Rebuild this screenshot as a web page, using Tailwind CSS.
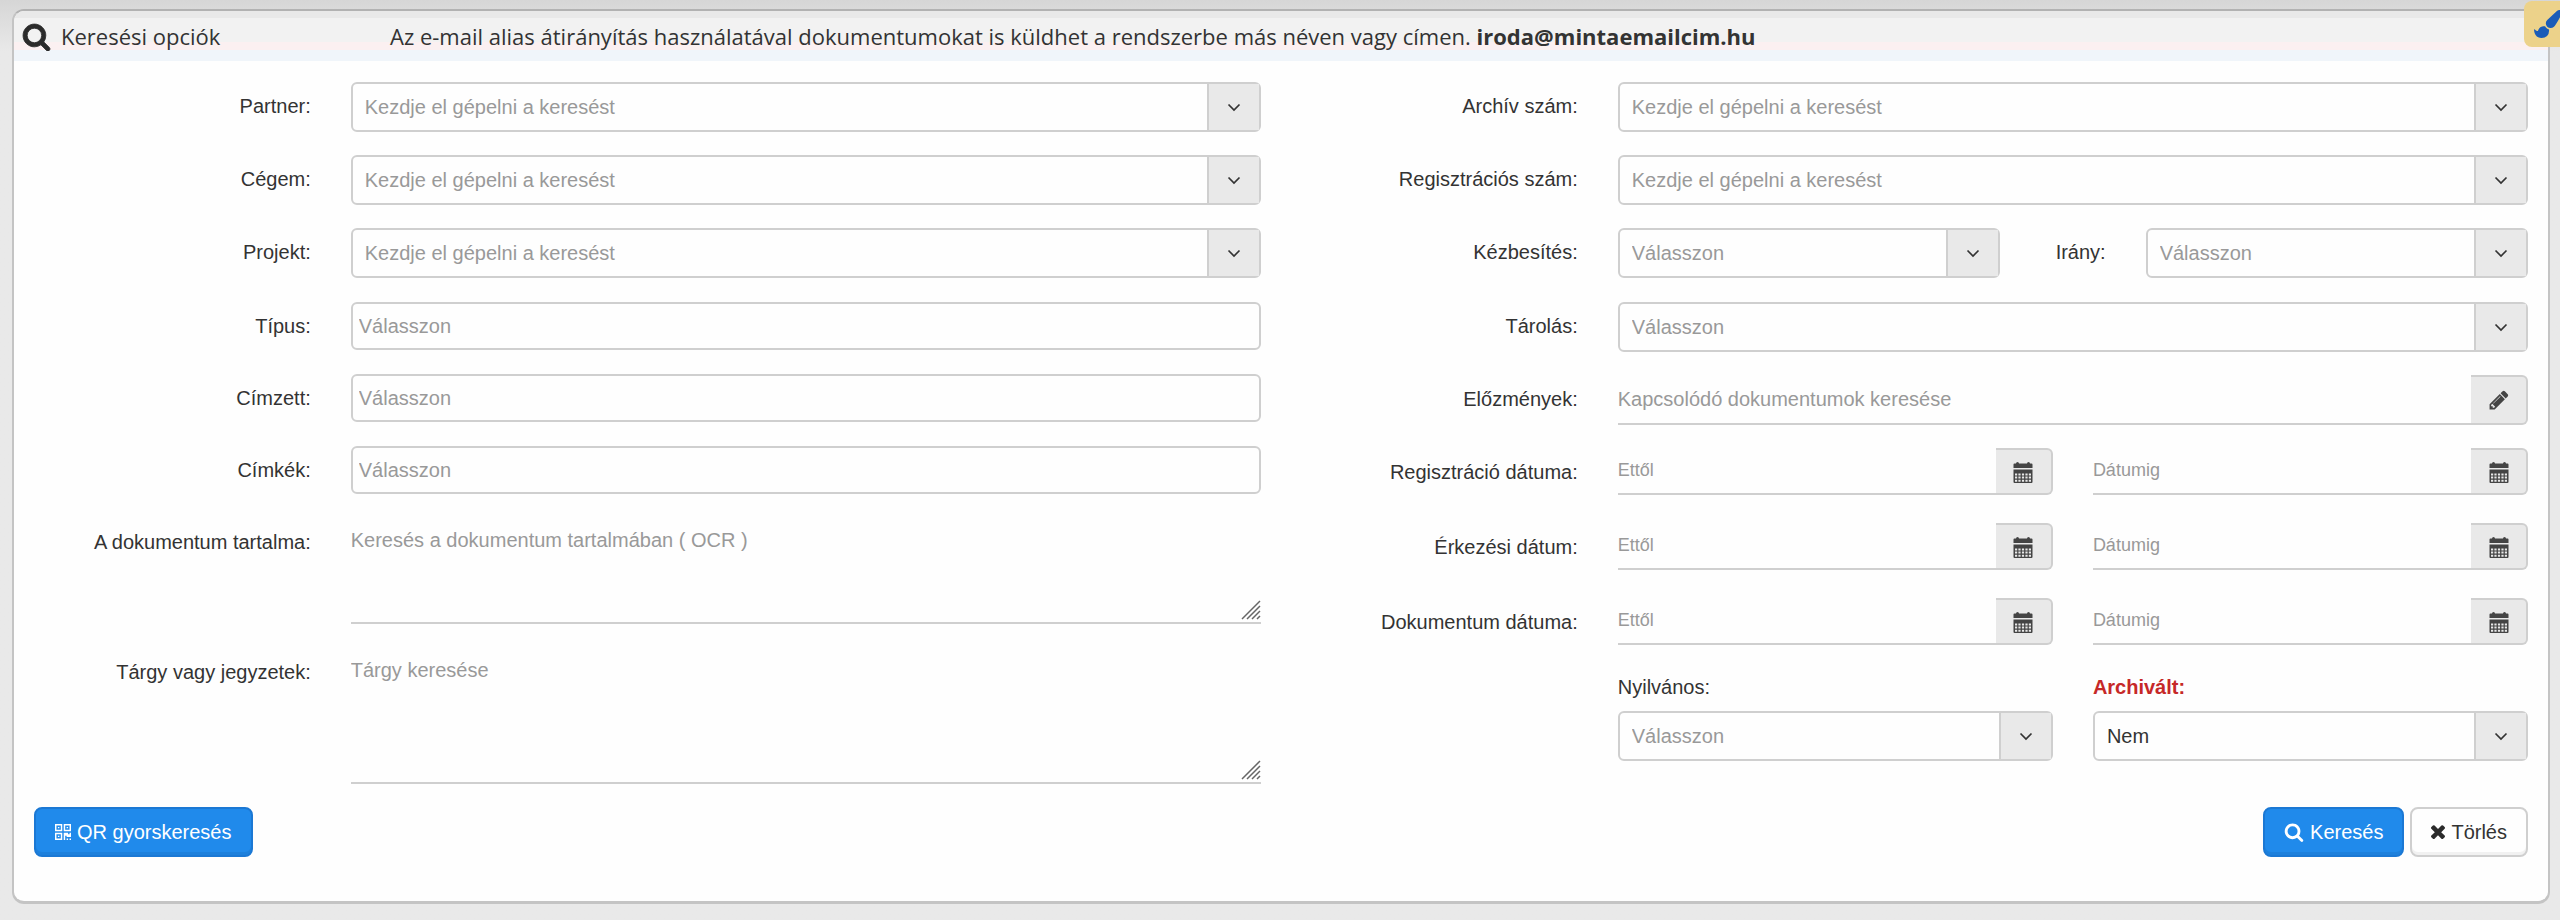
<!DOCTYPE html>
<html lang="hu">
<head>
  <meta charset="UTF-8" />
  <meta name="viewport" content="width=device-width, initial-scale=1" />
  <title>Keresési opciók</title>
  <script src="https://cdn.jsdelivr.net/npm/@tailwindcss/browser@4"></script>
</head>
<body class="relative min-h-screen overflow-x-hidden bg-[#e9e9e9] bg-linear-to-b from-[#d6d6d6] from-0% to-[#e9e9e9] to-[52px] pt-[9px] pr-2.5 pb-4 pl-3 font-['Liberation_Sans',Arial,sans-serif] text-xl/6 text-[#333]">
  <!-- Icons -->
  <svg class="hidden">
    <symbol id="i-search" viewBox="0 0 1792 1792"><path d="M1216 832q0-185-131.500-316.500t-316.500-131.500-316.500 131.500-131.500 316.500 131.500 316.500 316.500 131.500 316.500-131.500 131.500-316.500zm512 832q0 52-38 90t-90 38q-54 0-90-38l-343-342q-179 124-399 124-143 0-273.500-55.500t-225-150-150-225-55.500-273.500 55.500-273.500 150-225 225-150 273.500-55.500 273.500 55.500 225 150 150 225 55.500 273.500q0 220-124 399l343 343q37 37 37 90z" /></symbol>
    <symbol id="i-brush" viewBox="0 0 1792 1792"><path d="M1615 0q70 0 122.500 46.500t52.500 116.500q0 63-45 151-332 629-465 752-97 91-218 91-126 0-216.500-92.500t-90.500-219.500q0-128 92-212l638-579q59-54 130-54zm-909 1034q39 76 106.500 130t150.500 76l1 71q4 213-129.500 347t-348.500 134q-123 0-218-46.500t-152.500-127.500-86.500-183-29-220q7 5 41 30t62 44.500 59 36.500 46 17q41 0 55-37 25-66 57.500-112.500t69.500-76 88-47.500 103-25.500 125-10.500z" /></symbol>
    <symbol id="i-pencil" viewBox="0 0 1792 1792"><path d="M491 1536l91-91-235-235-91 91v107h128v128h107zm523-928q0-22-22-22-10 0-17 7l-542 542q-7 7-7 17 0 22 22 22 10 0 17-7l542-542q7-7 7-17zm-54-192l416 416-832 832h-416v-416zm683 96q0 53-37 90l-166 166-416-416 166-165q36-38 90-38 53 0 91 38l235 234q37 39 37 91z" /></symbol>
    <symbol id="i-times" viewBox="300 350 1192 1192"><path d="M1490 1322q0 40-28 68l-136 136q-28 28-68 28t-68-28l-294-294-294 294q-28 28-68 28t-68-28l-136-136q-28-28-28-68t28-68l294-294-294-294q-28-28-28-68t28-68l136-136q28-28 68-28t68 28l294 294 294-294q28-28 68-28t68 28l136 136q28 28 28 68t-28 68l-294 294 294 294q28 28 28 68z" /></symbol>
    <symbol id="i-chevron" viewBox="0 0 14 14"><path d="M1.500 4.500L7 10L12.500 4.500" fill="none" stroke="currentColor" stroke-width="1.700" /></symbol>
    <symbol id="i-calendar" viewBox="0 0 20 22">
      <path fill-rule="evenodd" d="M3 1.500a1.500 1.500 0 0 1 3 0h8a1.500 1.500 0 0 1 3 0h1.500q1 0 1 1V6H.5V2.500q0-1 1-1zM.5 7.500h19V20q0 1-1 1h-17q-1 0-1-1zM2 11.500v2h2.200v-2zm3.400 0v2h2.200v-2zm3.500 0v2h2.200v-2zm3.500 0v2h2.200v-2zm3.400 0v2h2.200v-2zM2 14.600v2h2.200v-2zm3.400 0v2h2.200v-2zm3.500 0v2h2.200v-2zm3.500 0v2h2.200v-2zm3.400 0v2h2.200v-2zM2 17.700v2h2.200v-2zm3.400 0v2h2.200v-2zm3.500 0v2h2.200v-2zm3.500 0v2h2.200v-2zm3.400 0v2h2.200v-2z" />
    </symbol>
    <symbol id="i-qrcode" viewBox="0 0 11 11">
      <path fill-rule="evenodd" d="M0 0h5v5H0zM1 1v3h3V1zM2 2h1v1H2zM6 0h5v5H6zM7 1v3h3V1zM8 2h1v1H8zM0 6h5v5H0zM1 7v3h3V7zM2 8h1v1H2zM6 6h3v1h1V6h1v3H8V8H7v3H6zM8 10h1v1H8zM10 10h1v1h-1z" />
    </symbol>
    <symbol id="i-grip" viewBox="0 0 20 20"><path d="M1 19L19 1M6 19L19 6M11 19L19 11M16 19L19 16" fill="none" stroke="currentColor" stroke-width="1.500" /></symbol>
  </svg>

  <form class="rounded-xl border-2 border-b-3 border-[#c4c4c4] border-t-[#b2b2b2] bg-[#fefefe]" onsubmit="return false">
    <!-- Header -->
    <header class="flex h-[50px] items-center rounded-t-[10px] bg-[linear-gradient(#e9e9e9_7px,#f2f2f2_7px,#f2f2f2_31px,#fbf0f1_31px,#fbf0f1_39px,#f0f5fa_39px)] px-2 font-['Open_Sans',sans-serif] text-[22px]/8">
      <h1 class="flex w-92 shrink-0 items-center gap-2.5">
        <svg class="size-[29px] fill-[#2b2b2b] stroke-[#2b2b2b] stroke-[50]"><use href="#i-search" /></svg>
        Keresési opciók
      </h1>
      <p>Az e-mail alias átirányítás használatával dokumentumokat is küldhet a rendszerbe más néven vagy címen. <b>iroda@mintaemailcim.hu</b></p>
    </header>

    <div class="px-5 pt-[21px] pb-11">
      <div class="grid grid-cols-2 gap-x-10">
        <!-- Left column -->
        <div class="flex flex-col gap-6">
          <div class="grid grid-cols-12 gap-x-10 gap-y-[23px]">
            <label for="partner" class="col-span-3 pt-3 text-right">Partner:</label>
            <div class="col-span-9 flex h-[50px] rounded-md border-2 border-[#cfcfcf]">
              <input id="partner" type="text" placeholder="Kezdje el gépelni a keresést" class="min-w-0 flex-1 px-3 placeholder:text-[#999]" />
              <button type="button" aria-label="Partner lista" class="flex w-[52px] items-center justify-center border-l-2 border-[#cfcfcf] bg-[#e9e9e9]"><svg class="size-3.5"><use href="#i-chevron" /></svg></button>
            </div>

            <label for="cegem" class="col-span-3 pt-3 text-right">Cégem:</label>
            <div class="col-span-9 flex h-[50px] rounded-md border-2 border-[#cfcfcf]">
              <input id="cegem" type="text" placeholder="Kezdje el gépelni a keresést" class="min-w-0 flex-1 px-3 placeholder:text-[#999]" />
              <button type="button" aria-label="Cég lista" class="flex w-[52px] items-center justify-center border-l-2 border-[#cfcfcf] bg-[#e9e9e9]"><svg class="size-3.5"><use href="#i-chevron" /></svg></button>
            </div>

            <label for="projekt" class="col-span-3 pt-3 text-right">Projekt:</label>
            <div class="col-span-9 flex h-[50px] rounded-md border-2 border-[#cfcfcf]">
              <input id="projekt" type="text" placeholder="Kezdje el gépelni a keresést" class="min-w-0 flex-1 px-3 placeholder:text-[#999]" />
              <button type="button" aria-label="Projekt lista" class="flex w-[52px] items-center justify-center border-l-2 border-[#cfcfcf] bg-[#e9e9e9]"><svg class="size-3.5"><use href="#i-chevron" /></svg></button>
            </div>
          </div>

          <div class="grid grid-cols-12 gap-x-10 gap-y-6">
            <label for="tipus" class="col-span-3 pt-3 text-right">Típus:</label>
            <input id="tipus" type="text" placeholder="Válasszon" class="col-span-9 h-12 rounded-md border-2 border-[#cfcfcf] px-1.5 placeholder:text-[#999]" />

            <label for="cimzett" class="col-span-3 pt-3 text-right">Címzett:</label>
            <input id="cimzett" type="text" placeholder="Válasszon" class="col-span-9 h-12 rounded-md border-2 border-[#cfcfcf] px-1.5 placeholder:text-[#999]" />

            <label for="cimkek" class="col-span-3 pt-3 text-right">Címkék:</label>
            <input id="cimkek" type="text" placeholder="Válasszon" class="col-span-9 h-12 rounded-md border-2 border-[#cfcfcf] px-1.5 placeholder:text-[#999]" />

            <label for="tartalom" class="col-span-3 pt-3 text-right">A dokumentum tartalma:</label>
            <div class="relative col-span-9">
              <textarea id="tartalom" placeholder="Keresés a dokumentum tartalmában ( OCR )" class="block h-[106px] w-full resize-none border-b-2 border-[#cfcfcf] pt-2.5 placeholder:text-[#999]"></textarea>
              <svg class="pointer-events-none absolute right-0 bottom-1 size-5 text-[#666]"><use href="#i-grip" /></svg>
            </div>

            <label for="targy" class="col-span-3 pt-3 text-right">Tárgy vagy jegyzetek:</label>
            <div class="relative col-span-9">
              <textarea id="targy" placeholder="Tárgy keresése" class="block h-[136px] w-full resize-none border-b-2 border-[#cfcfcf] pt-2.5 placeholder:text-[#999]"></textarea>
              <svg class="pointer-events-none absolute right-0 bottom-1 size-5 text-[#666]"><use href="#i-grip" /></svg>
            </div>
          </div>
        </div>

        <!-- Right column -->
        <div class="flex flex-col gap-6">
          <div class="grid grid-cols-12 gap-x-10 gap-y-[23px]">
            <label for="archiv" class="col-span-3 pt-3 text-right">Archív szám:</label>
            <div class="col-span-9 flex h-[50px] rounded-md border-2 border-[#cfcfcf]">
              <input id="archiv" type="text" placeholder="Kezdje el gépelni a keresést" class="min-w-0 flex-1 px-3 placeholder:text-[#999]" />
              <button type="button" aria-label="Archív szám lista" class="flex w-[52px] items-center justify-center border-l-2 border-[#cfcfcf] bg-[#e9e9e9]"><svg class="size-3.5"><use href="#i-chevron" /></svg></button>
            </div>

            <label for="regszam" class="col-span-3 pt-3 text-right">Regisztrációs szám:</label>
            <div class="col-span-9 flex h-[50px] rounded-md border-2 border-[#cfcfcf]">
              <input id="regszam" type="text" placeholder="Kezdje el gépelni a keresést" class="min-w-0 flex-1 px-3 placeholder:text-[#999]" />
              <button type="button" aria-label="Regisztrációs szám lista" class="flex w-[52px] items-center justify-center border-l-2 border-[#cfcfcf] bg-[#e9e9e9]"><svg class="size-3.5"><use href="#i-chevron" /></svg></button>
            </div>

            <label for="kezbesites" class="col-span-3 pt-3 text-right">Kézbesítés:</label>
            <div class="relative col-span-4 h-[50px] rounded-md border-2 border-[#cfcfcf]">
              <select id="kezbesites" class="h-full w-full appearance-none px-3 text-[#999]"><option>Válasszon</option></select>
              <span class="pointer-events-none absolute inset-y-0 right-0 flex w-[52px] items-center justify-center border-l-2 border-[#cfcfcf] bg-[#e9e9e9]"><svg class="size-3.5 text-[#333]"><use href="#i-chevron" /></svg></span>
            </div>
            <label for="irany" class="col-span-1 pt-3 text-right">Irány:</label>
            <div class="relative col-span-4 h-[50px] rounded-md border-2 border-[#cfcfcf]">
              <select id="irany" class="h-full w-full appearance-none px-3 text-[#999]"><option>Válasszon</option></select>
              <span class="pointer-events-none absolute inset-y-0 right-0 flex w-[52px] items-center justify-center border-l-2 border-[#cfcfcf] bg-[#e9e9e9]"><svg class="size-3.5"><use href="#i-chevron" /></svg></span>
            </div>
          </div>

          <div class="grid grid-cols-12 gap-x-10 gap-y-[23px]">
            <label for="tarolas" class="col-span-3 pt-3 text-right">Tárolás:</label>
            <div class="relative col-span-9 h-[50px] rounded-md border-2 border-[#cfcfcf]">
              <select id="tarolas" class="h-full w-full appearance-none px-3 text-[#999]"><option>Válasszon</option></select>
              <span class="pointer-events-none absolute inset-y-0 right-0 flex w-[52px] items-center justify-center border-l-2 border-[#cfcfcf] bg-[#e9e9e9]"><svg class="size-3.5"><use href="#i-chevron" /></svg></span>
            </div>

            <label for="elozmenyek" class="col-span-3 pt-3 text-right">Előzmények:</label>
            <div class="col-span-9 flex h-[50px]">
              <input id="elozmenyek" type="text" placeholder="Kapcsolódó dokumentumok keresése" class="min-w-0 flex-1 border-b-2 border-[#cfcfcf] placeholder:text-[#999]" />
              <button type="button" aria-label="Szerkesztés" class="flex w-[57px] items-center justify-center rounded-r-md border-2 border-l-0 border-[#cfcfcf] bg-[#e9e9e9]"><svg class="size-[22px] fill-[#444]"><use href="#i-pencil" /></svg></button>
            </div>

            <!-- Date ranges -->
            <div class="col-span-12 grid grid-cols-12 gap-x-10 gap-y-7">
              <label for="reg-tol" class="col-span-3 pt-3 text-right">Regisztráció dátuma:</label>
              <div class="col-span-9 grid h-[47px] grid-cols-2 gap-10 text-lg">
                <div class="flex">
                  <input id="reg-tol" type="text" placeholder="Ettől" class="min-w-0 flex-1 border-b-2 border-[#cfcfcf] pb-0.5 placeholder:text-[#999]" />
                  <button type="button" aria-label="Naptár" class="flex w-[57px] items-center justify-center rounded-r-md border-2 border-l-0 border-[#cfcfcf] bg-[#e9e9e9] pt-0.5"><svg class="h-[22px] w-5 fill-[#444]"><use href="#i-calendar" /></svg></button>
                </div>
                <div class="flex">
                  <input type="text" aria-label="Regisztráció dátumig" placeholder="Dátumig" class="min-w-0 flex-1 border-b-2 border-[#cfcfcf] pb-0.5 placeholder:text-[#999]" />
                  <button type="button" aria-label="Naptár" class="flex w-[57px] items-center justify-center rounded-r-md border-2 border-l-0 border-[#cfcfcf] bg-[#e9e9e9] pt-0.5"><svg class="h-[22px] w-5 fill-[#444]"><use href="#i-calendar" /></svg></button>
                </div>
              </div>

              <label for="erk-tol" class="col-span-3 pt-3 text-right">Érkezési dátum:</label>
              <div class="col-span-9 grid h-[47px] grid-cols-2 gap-10 text-lg">
                <div class="flex">
                  <input id="erk-tol" type="text" placeholder="Ettől" class="min-w-0 flex-1 border-b-2 border-[#cfcfcf] pb-0.5 placeholder:text-[#999]" />
                  <button type="button" aria-label="Naptár" class="flex w-[57px] items-center justify-center rounded-r-md border-2 border-l-0 border-[#cfcfcf] bg-[#e9e9e9] pt-0.5"><svg class="h-[22px] w-5 fill-[#444]"><use href="#i-calendar" /></svg></button>
                </div>
                <div class="flex">
                  <input type="text" aria-label="Érkezési dátumig" placeholder="Dátumig" class="min-w-0 flex-1 border-b-2 border-[#cfcfcf] pb-0.5 placeholder:text-[#999]" />
                  <button type="button" aria-label="Naptár" class="flex w-[57px] items-center justify-center rounded-r-md border-2 border-l-0 border-[#cfcfcf] bg-[#e9e9e9] pt-0.5"><svg class="h-[22px] w-5 fill-[#444]"><use href="#i-calendar" /></svg></button>
                </div>
              </div>

              <label for="dok-tol" class="col-span-3 pt-3 text-right">Dokumentum dátuma:</label>
              <div class="col-span-9 grid h-[47px] grid-cols-2 gap-10 text-lg">
                <div class="flex">
                  <input id="dok-tol" type="text" placeholder="Ettől" class="min-w-0 flex-1 border-b-2 border-[#cfcfcf] pb-0.5 placeholder:text-[#999]" />
                  <button type="button" aria-label="Naptár" class="flex w-[57px] items-center justify-center rounded-r-md border-2 border-l-0 border-[#cfcfcf] bg-[#e9e9e9] pt-0.5"><svg class="h-[22px] w-5 fill-[#444]"><use href="#i-calendar" /></svg></button>
                </div>
                <div class="flex">
                  <input type="text" aria-label="Dokumentum dátumig" placeholder="Dátumig" class="min-w-0 flex-1 border-b-2 border-[#cfcfcf] pb-0.5 placeholder:text-[#999]" />
                  <button type="button" aria-label="Naptár" class="flex w-[57px] items-center justify-center rounded-r-md border-2 border-l-0 border-[#cfcfcf] bg-[#e9e9e9] pt-0.5"><svg class="h-[22px] w-5 fill-[#444]"><use href="#i-calendar" /></svg></button>
                </div>
              </div>

              <div class="col-span-9 col-start-4 grid grid-cols-2 gap-x-10 gap-y-3 pt-0.5">
                <label for="nyilvanos">Nyilvános:</label>
                <label for="archivalt" class="font-bold text-[#c62828]">Archivált:</label>
                <div class="relative h-[50px] rounded-md border-2 border-[#cfcfcf]">
                  <select id="nyilvanos" class="h-full w-full appearance-none px-3 text-[#999]"><option>Válasszon</option></select>
                  <span class="pointer-events-none absolute inset-y-0 right-0 flex w-[52px] items-center justify-center border-l-2 border-[#cfcfcf] bg-[#e9e9e9]"><svg class="size-3.5"><use href="#i-chevron" /></svg></span>
                </div>
                <div class="relative h-[50px] rounded-md border-2 border-[#cfcfcf]">
                  <select id="archivalt" class="h-full w-full appearance-none px-3"><option>Nem</option><option>Igen</option></select>
                  <span class="pointer-events-none absolute inset-y-0 right-0 flex w-[52px] items-center justify-center border-l-2 border-[#cfcfcf] bg-[#e9e9e9]"><svg class="size-3.5"><use href="#i-chevron" /></svg></span>
                </div>
              </div>
            </div>
          </div>
        </div>
      </div>

      <!-- Buttons -->
      <div class="mt-[23px] flex items-center gap-1.5">
        <button type="button" class="mr-auto flex h-[50px] items-center gap-1.5 rounded-lg border-2 border-[#1b78d4] bg-[#208aeb] px-[19px] text-white inset-shadow-[0_-3px_0_#1d80dc]">
          <svg class="size-4 fill-current"><use href="#i-qrcode" /></svg>QR gyorskeresés
        </button>
        <button type="submit" class="flex h-[50px] items-center gap-1.5 rounded-lg border-2 border-[#1b78d4] bg-[#208aeb] px-[19px] text-white inset-shadow-[0_-3px_0_#1d80dc]">
          <svg class="size-5 fill-current"><use href="#i-search" /></svg>Keresés
        </button>
        <button type="reset" class="flex h-[50px] items-center gap-1.5 rounded-lg border-2 border-[#cfcfcf] bg-[#fefefe] px-[19px] inset-shadow-[0_-3px_0_#f1f1f1]">
          <svg class="size-3.5 fill-[#2b2b2b]"><use href="#i-times" /></svg>Törlés
        </button>
      </div>
    </div>
  </form>

  <!-- Theme button on the window edge -->
  <button type="button" aria-label="Téma" class="absolute top-px right-0 flex h-[46px] w-9 items-center overflow-hidden rounded-l-lg bg-[#ecd28a] pl-2.5">
    <svg class="size-7 shrink-0 fill-[#1a5cb8]"><use href="#i-brush" /></svg>
  </button>
</body>
</html>
